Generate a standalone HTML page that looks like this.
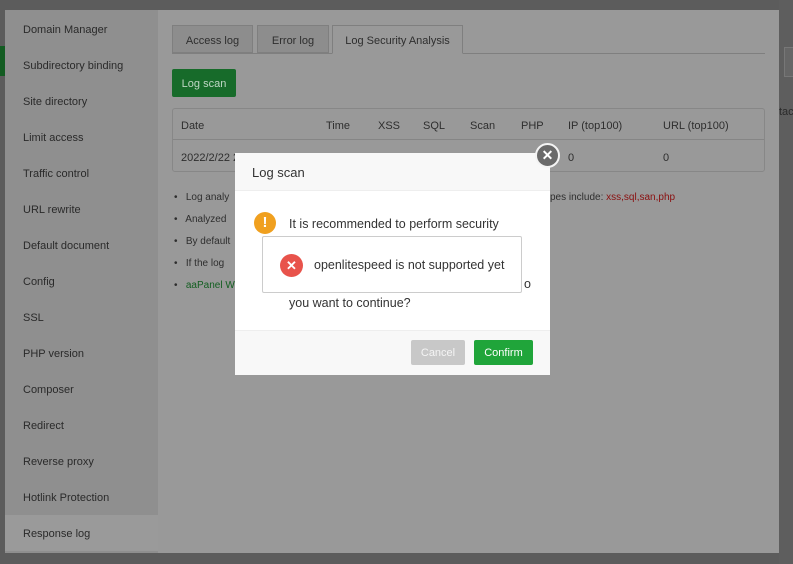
<!DOCTYPE html>
<html><head><meta charset="utf-8"><style>
*{margin:0;padding:0;box-sizing:border-box}
body{width:793px;height:564px;overflow:hidden;background:#5c5c5c;font-family:"Liberation Sans",sans-serif;font-size:12px;color:#333;position:relative}
.abs{position:absolute}
.panel{left:5px;top:10px;width:774px;height:543px;background:#999}
.side{left:5px;top:10px;width:153px;height:543px;background:#8f8f8f}
.side div{position:absolute;left:18px;font-size:11px;color:#2a2a2a}
.tab{top:25px;height:28px;border:1px solid #7f7f7f;background:#8d8d8d;color:#2e2e2e;font-size:11px;text-align:center;line-height:30px}
.tbl{left:172px;top:108px;width:593px;height:64px;border:1px solid #878787;border-radius:3px}
.th{top:120px;font-size:11px;color:#2e2e2e}
.bl{left:174px;font-size:10px;color:#2e2e2e}
.modal{left:235px;top:153px;width:315px;height:222px;background:#fff;border-radius:2px}
</style></head><body>
<div class="abs panel"></div>
<div class="abs" style="left:779px;top:0;width:14px;height:564px;background:#5e5e5e"></div>
<div class="abs" style="left:784px;top:47px;width:9px;height:30px;border:1px solid #777;border-right:none;background:#666"></div>
<div class="abs" style="left:779px;top:106px;font-size:11px;color:#2a2a2a">tac</div>
<div class="abs" style="left:0;top:46px;width:5px;height:30px;background:#135c22"></div>
<div class="abs side"></div>
<div class="abs" style="left:5px;top:515px;width:153px;height:36px;background:#9a9a9a"></div>
<div class="abs side" style="background:none">
<div style="top:14px">Domain Manager</div><div style="top:50px">Subdirectory binding</div><div style="top:86px">Site directory</div><div style="top:122px">Limit access</div><div style="top:158px">Traffic control</div><div style="top:194px">URL rewrite</div><div style="top:230px">Default document</div><div style="top:266px">Config</div><div style="top:302px">SSL</div><div style="top:338px">PHP version</div><div style="top:374px">Composer</div><div style="top:410px">Redirect</div><div style="top:446px">Reverse proxy</div><div style="top:482px">Hotlink Protection</div><div style="top:518px">Response log</div>
</div>
<div class="abs" style="left:172px;top:53px;width:593px;height:1px;background:#7f7f7f"></div>
<div class="abs tab" style="left:172px;width:81px">Access log</div>
<div class="abs tab" style="left:257px;width:72px">Error log</div>
<div class="abs tab" style="left:332px;width:131px;background:#999;border-bottom-color:#999;height:29px">Log Security Analysis</div>
<div class="abs" style="left:172px;top:69px;width:64px;height:28px;background:#176b2a;border-radius:2px;color:#bfd6c4;font-size:11px;line-height:30px;text-align:center">Log scan</div>
<div class="abs tbl"></div>
<div class="abs" style="left:173px;top:139px;width:591px;height:1px;background:#858585"></div>
<div class="abs th" style="left:181px">Date</div><div class="abs th" style="left:326px">Time</div><div class="abs th" style="left:378px">XSS</div><div class="abs th" style="left:423px">SQL</div><div class="abs th" style="left:470px">Scan</div><div class="abs th" style="left:521px">PHP</div><div class="abs th" style="left:568px">IP (top100)</div><div class="abs th" style="left:663px">URL (top100)</div>
<div class="abs th" style="left:181px;top:152px">2022/2/22 2</div><div class="abs th" style="left:568px;top:152px">0</div><div class="abs th" style="left:663px;top:152px">0</div>
<div class="abs bl" style="top:192px">•&nbsp;&nbsp; Log analy</div>
<div class="abs bl" style="top:214px">•&nbsp;&nbsp; Analyzed</div>
<div class="abs bl" style="top:236px">•&nbsp;&nbsp; By default</div>
<div class="abs bl" style="top:258px">•&nbsp;&nbsp; If the log</div>
<div class="abs bl" style="top:280px">•&nbsp;&nbsp; <span style="color:#125e20">aaPanel W</span></div>
<div class="abs bl" style="left:550px;top:192px">pes include: <span style="color:#8a0f0f">xss,sql,san,php</span></div>
<div class="abs modal">
<div class="abs" style="left:0;top:0;width:315px;height:38px;background:#f8f8f8;border-bottom:1px solid #eee;font-size:13px;line-height:40px;padding-left:17px;color:#333">Log scan</div>
<div class="abs" style="left:19px;top:59px;width:22px;height:22px;border-radius:50%;background:#f0a01f;color:#fff;font-weight:bold;text-align:center;line-height:22px;font-size:15px">!</div>
<div class="abs" style="left:54px;top:64px;font-size:12.5px;color:#333">It is recommended to perform security</div>
<div class="abs" style="left:289px;top:124px;font-size:12.5px;color:#333">o</div>
<div class="abs" style="left:54px;top:143px;font-size:12.5px;color:#333">you want to continue?</div>
<div class="abs" style="left:0;top:177px;width:315px;height:45px;background:#f8f8f8;border-top:1px solid #eee"></div>
<div class="abs" style="left:176px;top:187px;width:54px;height:25px;background:#c8c8c8;border-radius:2px;color:#f4f4f4;font-size:11px;line-height:27px;text-align:center">Cancel</div>
<div class="abs" style="left:239px;top:187px;width:59px;height:25px;background:#20a53a;border-radius:2px;color:#fff;font-size:11px;line-height:27px;text-align:center">Confirm</div>
</div>
<div class="abs" style="left:262px;top:236px;width:260px;height:57px;background:#fff;border:1px solid #ccc;border-radius:2px">
<div class="abs" style="left:17px;top:17px;width:23px;height:23px;border-radius:50%;background:#e8534b;color:#fff;text-align:center;line-height:23px;font-size:13px;font-weight:bold">✕</div>
<div class="abs" style="left:51px;top:21px;font-size:12.5px;color:#333;white-space:nowrap">openlitespeed is not supported yet</div>
</div>
<div class="abs" style="left:535px;top:143px;width:25px;height:25px;border-radius:50%;background:#6a6a6a;border:2px solid #f4f4f4;color:#fff;text-align:center;line-height:21px;font-size:14px;font-weight:bold">✕</div>
</body></html>
